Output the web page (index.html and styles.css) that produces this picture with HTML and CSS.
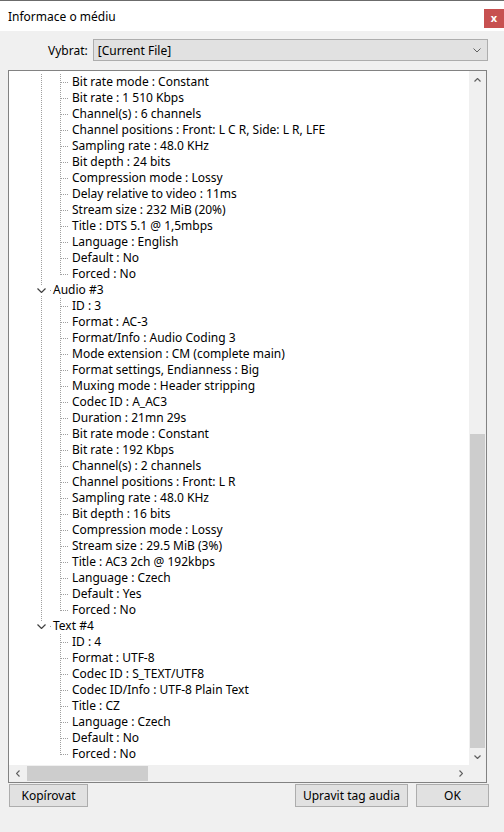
FILE: index.html
```html
<!DOCTYPE html>
<html lang="cs">
<head>
  <meta charset="UTF-8">
  <title>Informace o médiu</title>
  <meta name="viewport" content="width=device-width, initial-scale=1.0">
  <link rel="stylesheet" href="styles.css">
</head>
<body>
  <div class="window">
    <div class="titlebar">
      <span class="title">Informace o médiu</span>
      <button class="close" type="button" aria-label="Zavřít">x</button>
    </div>

    <div class="content">
      <div class="picker">
        <label for="file">Vybrat:</label>
        <div class="select" id="file">
          <span>[Current File]</span>
          <svg width="8" height="5" viewBox="0 0 8 5"><polyline points="0.5,0.5 4,4 7.5,0.5" fill="none" stroke="#606060" stroke-width="1"/></svg>
        </div>
      </div>

      <div class="treebox">
        <div class="view">
          <ul class="tree">
            <!-- Audio #2 header is scrolled out of view -->
            <li>
              <ul>
                <li>Bit rate mode : Constant</li>
                <li>Bit rate : 1 510 Kbps</li>
                <li>Channel(s) : 6 channels</li>
                <li>Channel positions : Front: L C R, Side: L R, LFE</li>
                <li>Sampling rate : 48.0 KHz</li>
                <li>Bit depth : 24 bits</li>
                <li>Compression mode : Lossy</li>
                <li>Delay relative to video : 11ms</li>
                <li>Stream size : 232 MiB (20%)</li>
                <li>Title : DTS 5.1 @ 1,5mbps</li>
                <li>Language : English</li>
                <li>Default : No</li>
                <li>Forced : No</li>
              </ul>
            </li>
            <li>
              <div class="node"><span class="toggle"><svg width="9" height="5" viewBox="0 0 9 5"><polyline points="0.5,0.5 4.5,4.5 8.5,0.5" fill="none" stroke="#404040" stroke-width="1.2"/></svg></span>Audio #3</div>
              <ul>
                <li>ID : 3</li>
                <li>Format : AC-3</li>
                <li>Format/Info : Audio Coding 3</li>
                <li>Mode extension : CM (complete main)</li>
                <li>Format settings, Endianness : Big</li>
                <li>Muxing mode : Header stripping</li>
                <li>Codec ID : A_AC3</li>
                <li>Duration : 21mn 29s</li>
                <li>Bit rate mode : Constant</li>
                <li>Bit rate : 192 Kbps</li>
                <li>Channel(s) : 2 channels</li>
                <li>Channel positions : Front: L R</li>
                <li>Sampling rate : 48.0 KHz</li>
                <li>Bit depth : 16 bits</li>
                <li>Compression mode : Lossy</li>
                <li>Stream size : 29.5 MiB (3%)</li>
                <li>Title : AC3 2ch @ 192kbps</li>
                <li>Language : Czech</li>
                <li>Default : Yes</li>
                <li>Forced : No</li>
              </ul>
            </li>
            <li>
              <div class="node"><span class="toggle"><svg width="9" height="5" viewBox="0 0 9 5"><polyline points="0.5,0.5 4.5,4.5 8.5,0.5" fill="none" stroke="#404040" stroke-width="1.2"/></svg></span>Text #4</div>
              <ul>
                <li>ID : 4</li>
                <li>Format : UTF-8</li>
                <li>Codec ID : S_TEXT/UTF8</li>
                <li>Codec ID/Info : UTF-8 Plain Text</li>
                <li>Title : CZ</li>
                <li>Language : Czech</li>
                <li>Default : No</li>
                <li>Forced : No</li>
              </ul>
            </li>
          </ul>
        </div>

        <!-- Vertical scrollbar -->
        <div class="vscroll">
          <span class="arrow"><svg width="7" height="4" viewBox="0 0 7 4"><polyline points="0.5,3.5 3.5,0.5 6.5,3.5" fill="none" stroke="#606060" stroke-width="1.2"/></svg></span>
          <div class="track"><div class="vthumb"></div></div>
          <span class="arrow"><svg width="7" height="4" viewBox="0 0 7 4"><polyline points="0.5,0.5 3.5,3.5 6.5,0.5" fill="none" stroke="#606060" stroke-width="1.2"/></svg></span>
        </div>

        <!-- Horizontal scrollbar -->
        <div class="hscroll">
          <span class="arrow"><svg width="4" height="7" viewBox="0 0 4 7"><polyline points="3.5,0.5 0.5,3.5 3.5,6.5" fill="none" stroke="#606060" stroke-width="1.2"/></svg></span>
          <div class="track"><div class="hthumb"></div></div>
          <span class="arrow"><svg width="4" height="7" viewBox="0 0 4 7"><polyline points="0.5,0.5 3.5,3.5 0.5,6.5" fill="none" stroke="#606060" stroke-width="1.2"/></svg></span>
        </div>
        <div class="corner"></div>
      </div>

      <div class="buttons">
        <button type="button" class="btn copy">Kopírovat</button>
        <button type="button" class="btn tag">Upravit tag audia</button>
        <button type="button" class="btn ok">OK</button>
      </div>
    </div>
  </div>
</body>
</html>
```

FILE: styles.css
```css
body {
  margin: 0;
  background: #f0f0f0;
  font-family: "Segoe UI", "Noto Sans", "DejaVu Sans", sans-serif;
  font-size: 12px;
  color: #000;
}
.window {
  border-top: 1px solid #6b6b6b;
  height: 831px;
}
/* Title bar */
.titlebar {
  height: 30px;
  background: #fff;
  display: flex;
  justify-content: space-between;
  align-items: center;
  padding-left: 8px;
}
.title {
  margin-top: 1px;
}
.close {
  width: 20px;
  height: 19px;
  margin-top: 4px;
  padding: 0 0 2px;
  border: none;
  background: #c75050;
  color: #fff;
  font-family: inherit;
  font-size: 11px;
  font-weight: bold;
  line-height: 17px;
}
.content {
  padding: 8px 15px 0 8px;
}
/* File picker */
.picker {
  display: flex;
  align-items: center;
  padding-left: 40px;
  gap: 6px;
}
.select {
  width: 383px;
  height: 20px;
  border: 1px solid #adadad;
  background: #e1e1e1;
  display: flex;
  align-items: center;
  justify-content: space-between;
  padding: 0 6px 0 4px;
  margin-left: -1px;
}
/* Tree view */
.treebox {
  margin-top: 9px;
  width: 477px;
  height: 711px;
  border: 1px solid #828282;
  background: #fff;
  display: grid;
  grid-template-columns: 460px 17px;
  grid-template-rows: 694px 17px;
}
.view {
  overflow: hidden;
  white-space: nowrap;
}
.tree, .tree ul {
  list-style: none;
  margin: 0;
  padding: 0;
}
.tree {
  padding: 3px 0 0 23px;
}
.tree li {
  position: relative;
}
/* dotted guide lines */
.tree li::before {
  content: "";
  position: absolute;
  left: 9px;
  top: 0;
  bottom: 0;
  width: 1px;
  background: linear-gradient(#a0a0a0 50%, transparent 50%) 0 0 / 1px 2px repeat-y;
}
.tree > li:last-child::before {
  bottom: auto;
  height: 8px;
}
.tree ul {
  padding-left: 19px;
}
.tree ul li {
  height: 16px;
  line-height: 16px;
  padding-left: 21px;
}
.tree ul li::after {
  content: "";
  position: absolute;
  left: 10px;
  top: 8px;
  width: 8px;
  height: 1px;
  background: linear-gradient(to right, #a0a0a0 50%, transparent 50%) 0 0 / 2px 1px repeat-x;
}
.tree ul li:last-child::before {
  bottom: auto;
  height: 9px;
}
.node {
  position: relative;
  height: 16px;
  line-height: 16px;
  padding-left: 21px;
}
.node::after {
  content: "";
  position: absolute;
  left: 18px;
  top: 8px;
  width: 1px;
  height: 1px;
  background: #a0a0a0;
}
.toggle {
  position: absolute;
  left: 1px;
  top: 3px;
  width: 16px;
  height: 10px;
  background: #fff;
  display: flex;
  align-items: center;
  justify-content: center;
  z-index: 1;
}
/* Scrollbars */
.vscroll, .hscroll, .corner {
  background: #f0f0f0;
  display: flex;
}
.vscroll {
  flex-direction: column;
}
.arrow {
  width: 17px;
  height: 17px;
  flex: none;
  display: flex;
  align-items: center;
  justify-content: center;
}
.track {
  flex: 1;
}
.vthumb {
  margin: 346px 1px 0;
  height: 314px;
  background: #cdcdcd;
}
.hthumb {
  margin: 1px 0 0 1px;
  width: 121px;
  height: 15px;
  background: #cdcdcd;
}
/* Bottom buttons */
.buttons {
  display: flex;
  gap: 8px;
  margin-top: 1px;
  padding-left: 1px;
}
.btn {
  height: 23px;
  border: 1px solid #adadad;
  background: #e1e1e1;
  font-family: inherit;
  font-size: 12px;
  color: #000;
  padding: 0;
}
.copy {
  width: 79px;
}
.tag {
  width: 113px;
  margin-left: auto;
}
.ok {
  width: 73px;
}
```
